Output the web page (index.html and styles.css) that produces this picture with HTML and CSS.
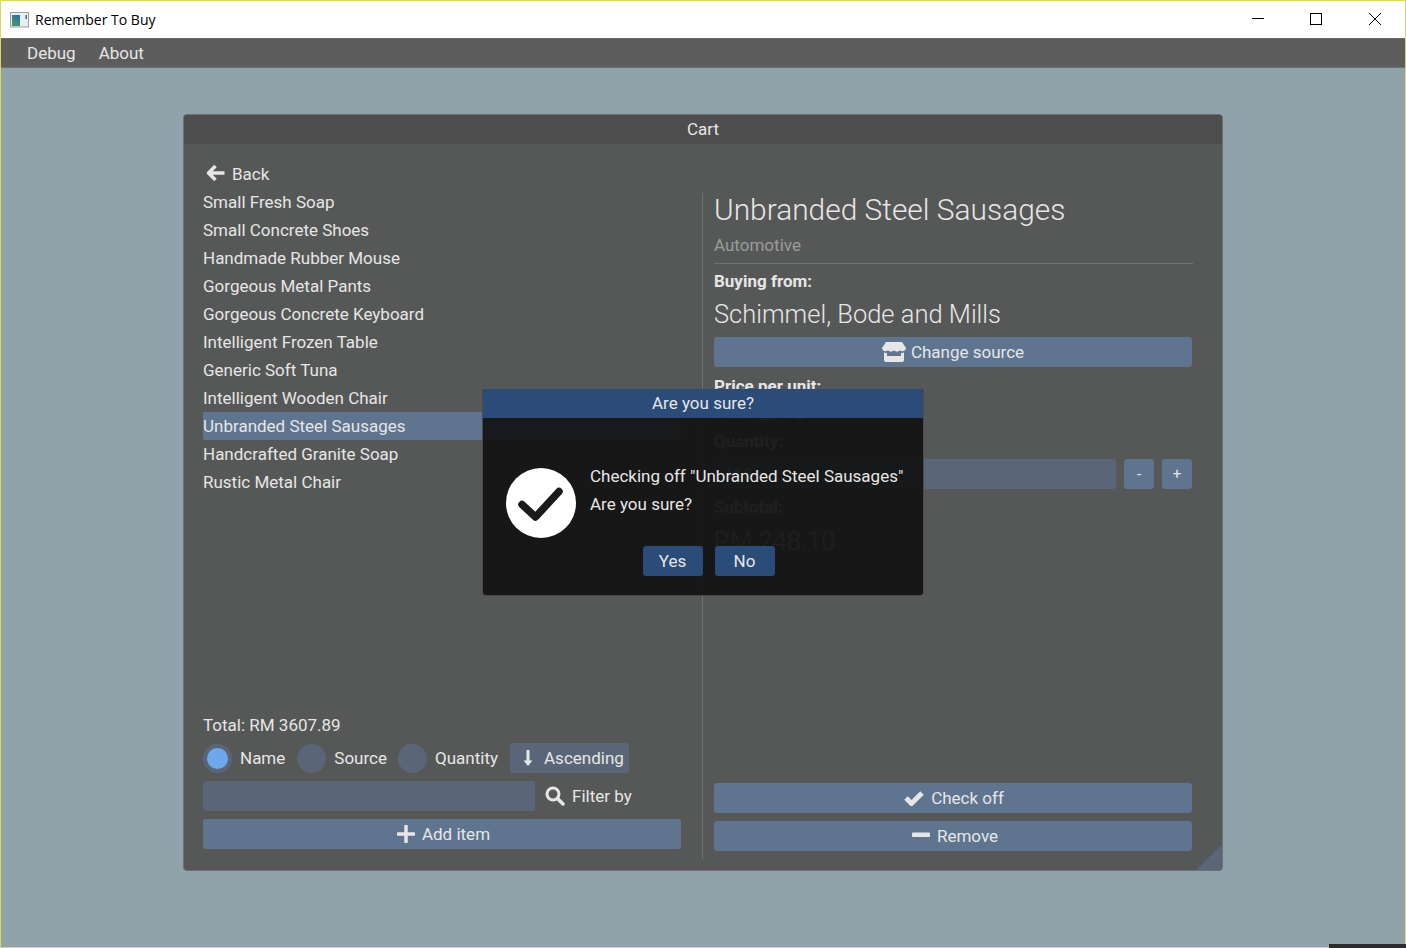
FILE: index.html
```html
<!DOCTYPE html>
<html lang="en">
<head>
    <meta charset="UTF-8">
    <title>Remember To Buy</title>
    <link rel="stylesheet" href="styles.css">
</head>
<body>

<div class="window">
    <div class="titlebar">
        <svg class="app-icon" width="20" height="16" viewBox="0 0 20 16">
            <defs>
                <linearGradient id="appGrad" x1="0" y1="1" x2="0.4" y2="0">
                    <stop offset="0" stop-color="#4f9a6a"/>
                    <stop offset="1" stop-color="#2f7496"/>
                </linearGradient>
            </defs>
            <rect x="0.5" y="0.5" width="18" height="14.500" fill="#e9edeb" stroke="#9a9fa3"/>
            <rect x="2" y="3" width="8" height="11" fill="url(#appGrad)"/>
            <rect x="15.500" y="3" width="1.500" height="4" fill="#2f7496"/>
        </svg>
        <span class="app-title">Remember To Buy</span>
        <div class="window-buttons">
            <svg width="14" height="14" viewBox="0 0 14 14"><path d="M2 6.5h12" stroke="#000" fill="none"/></svg>
            <svg width="14" height="14" viewBox="0 0 14 14"><rect x="1.5" y="1.5" width="11" height="11" stroke="#000" fill="none"/></svg>
            <svg width="14" height="14" viewBox="0 0 14 14"><path d="M1 1l12 12M13 1L1 13" stroke="#000" fill="none"/></svg>
        </div>
    </div>
    <div class="menubar">
        <span>Debug</span>
        <span>About</span>
    </div>

    <div class="desktop">
        <div class="panel">
            <div class="panel-title">Cart</div>
            <div class="panel-body">
                <div class="left-col">
                    <div class="back">
                        <svg width="20" height="18" viewBox="0 0 20 18"><path d="M9.500 2L2.500 9 9.500 16M3 9h15.500" stroke="#e6e6e6" stroke-width="3.500" fill="none" stroke-linejoin="round"/></svg>
                        <span>Back</span>
                    </div>
                    <ul class="item-list">
                        <li>Small Fresh Soap</li>
                        <li>Small Concrete Shoes</li>
                        <li>Handmade Rubber Mouse</li>
                        <li>Gorgeous Metal Pants</li>
                        <li>Gorgeous Concrete Keyboard</li>
                        <li>Intelligent Frozen Table</li>
                        <li>Generic Soft Tuna</li>
                        <li>Intelligent Wooden Chair</li>
                        <li class="selected">Unbranded Steel Sausages</li>
                        <li>Handcrafted Granite Soap</li>
                        <li>Rustic Metal Chair</li>
                    </ul>
                    <div class="total">Total: RM 3607.89</div>
                    <div class="sort-row">
                        <span class="radio checked"><i></i></span>
                        <span class="radio-label">Name</span>
                        <span class="radio"></span>
                        <span class="radio-label tight">Source</span>
                        <span class="radio"></span>
                        <span class="radio-label">Quantity</span>
                        <span class="sort-btn">
                            <svg width="10" height="18" viewBox="0 0 10 18"><path d="M5 1v12" stroke="#e6e6e6" stroke-width="3" fill="none"/><path d="M0.500 11.500h9L5 17z" fill="#e6e6e6"/></svg>
                            Ascending
                        </span>
                    </div>
                    <div class="filter-row">
                        <div class="input filter-input"></div>
                        <svg width="20" height="20" viewBox="0 0 20 20"><circle cx="8" cy="8" r="6" stroke="#e6e6e6" stroke-width="3" fill="none"/><path d="M12.500 12.500L18 18" stroke="#e6e6e6" stroke-width="3.500" stroke-linecap="round"/></svg>
                        <span>Filter by</span>
                    </div>
                    <div class="btn add-btn">
                        <svg width="18" height="18" viewBox="0 0 18 18"><path d="M9 1v16M1 9h16" stroke="#e6e6e6" stroke-width="3.500" stroke-linecap="round"/></svg>
                        Add item
                    </div>
                </div>

                <div class="right-col">
                    <h1 class="item-name">Unbranded Steel Sausages</h1>
                    <div class="category">Automotive</div>
                    <div class="label buying">Buying from:</div>
                    <div class="source-name">Schimmel, Bode and Mills</div>
                    <div class="btn source-btn">
                        <svg width="24" height="20" viewBox="0 0 24 20"><path d="M4 0h16l4 6c0 3-3.500 4-6 2.500-2 1.500-4 1.500-6 0-2 1.500-4 1.500-6 0C3.500 10 0 9 0 6z" fill="#e6e6e6"/><path d="M2 10.500c1.500.5 2 .5 3 .2V14h14v-3.300c1 .3 1.500.3 3-.2V18a2 2 0 0 1-2 2H4a2 2 0 0 1-2-2z" fill="#e6e6e6"/></svg>
                        Change source
                    </div>
                    <div class="label price-label">Price per unit:</div>
                    <div class="price">RM 2.10</div>
                    <div class="label">Quantity:</div>
                    <div class="qty-row">
                        <div class="input qty-input">118</div>
                        <div class="btn small-btn">-</div>
                        <div class="btn small-btn">+</div>
                    </div>
                    <div class="label subtotal-label">Subtotal:</div>
                    <div class="subtotal">RM 248.10</div>
                    <div class="right-actions">
                        <div class="btn check-btn">
                            <svg width="20" height="16" viewBox="0 0 20 16"><path d="M2 8l5.500 5.500L18 3" stroke="#e6e6e6" stroke-width="5" fill="none"/></svg>
                            Check off
                        </div>
                        <div class="btn remove-btn">
                            <svg width="18" height="6" viewBox="0 0 18 6"><rect width="18" height="4.500" y="0.500" rx="1" fill="#e6e6e6"/></svg>
                            Remove
                        </div>
                    </div>
                </div>
            </div>
            <div class="grip"></div>
        </div>

        <div class="modal">
            <div class="modal-title">Are you sure?</div>
            <div class="modal-body">
                <svg class="modal-icon" width="70" height="70" viewBox="0 0 70 70">
                    <circle cx="35" cy="35" r="35" fill="#fff"/>
                    <path d="M16 36.500L29.500 49 53 23.500" stroke="#1a1a1a" stroke-width="7.500" fill="none" stroke-linecap="round" stroke-linejoin="round"/>
                </svg>
                <div class="modal-text">
                    <div>Checking off "Unbranded Steel Sausages"</div>
                    <div>Are you sure?</div>
                </div>
            </div>
            <div class="modal-buttons">
                <div class="modal-btn">Yes</div>
                <div class="modal-btn">No</div>
            </div>
        </div>
    </div>
</div>
<div class="taskbar-edge"></div>

</body>
</html>
```

FILE: styles.css
```css
* {
    box-sizing: border-box;
}
html, body {
    height: 100%;
    margin: 0;
}
body {
    font-family: 'Roboto', sans-serif;
    font-size: 17px;
    color: #e6e6e6;
    overflow: hidden;
}
.window {
    position: relative;
    display: flex;
    flex-direction: column;
    height: 948px;
    border: 1px solid #dfd94f;
    background-color: #90a2aa;
}
.titlebar {
    display: flex;
    align-items: center;
    height: 37px;
    padding-left: 9px;
    background-color: #fff;
    color: #000;
    font-family: 'Open Sans', sans-serif;
    font-size: 14px;
}
.app-icon {
    margin-right: 5px;
}
.window-buttons {
    display: flex;
    gap: 45px;
    margin-left: auto;
    margin-right: 23px;
    margin-bottom: 2px;
}
.menubar {
    display: flex;
    gap: 23px;
    align-items: center;
    height: 30px;
    padding-left: 26px;
    background-color: #5d5d5d;
    border-top: 1px solid #6a6a6a;
    border-bottom: 1px solid #6d7274;
}
.desktop {
    flex: 1;
    padding-top: 46px;
}
.panel {
    position: relative;
    width: 1040px;
    height: 757px;
    margin: 0 auto;
    display: flex;
    flex-direction: column;
    background-color: #565857;
    border: 1px solid #6c6f70;
    border-radius: 4px;
    overflow: hidden;
}
.panel-title {
    height: 29px;
    line-height: 29px;
    text-align: center;
    background-color: #4d4d4d;
}
.panel-body {
    flex: 1;
    display: flex;
    padding: 0 30px 11px 19px;
}
.left-col {
    width: 478px;
    display: flex;
    flex-direction: column;
    padding-bottom: 10px;
}
.back {
    display: flex;
    align-items: center;
    gap: 6px;
    height: 28px;
    margin-top: 16px;
    padding-left: 3px;
}
.back svg {
    margin-bottom: 2px;
}
.item-list {
    list-style: none;
    margin: 0;
    padding: 0;
    flex: 1;
}
.item-list li {
    height: 28px;
    line-height: 29px;
    border-radius: 2px;
}
.item-list .selected {
    background-color: #5f748f;
}
.total {
    height: 28px;
    line-height: 26px;
}
.sort-row {
    display: flex;
    align-items: center;
    height: 30px;
    margin-top: 3px;
}
.radio {
    width: 29px;
    height: 29px;
    border-radius: 50%;
    background-color: #5a6677;
    display: flex;
    align-items: center;
    justify-content: center;
}
.radio i {
    width: 21px;
    height: 21px;
    border-radius: 50%;
    background-color: #6ea8ec;
}
.radio-label {
    margin: 0 12px 0 8px;
}
.radio-label.tight {
    margin-right: 11px;
}
.sort-btn {
    display: flex;
    align-items: center;
    gap: 11px;
    height: 30px;
    padding: 0 5px 0 13px;
    background-color: #5a6677;
    border-radius: 3px;
}
.filter-row {
    display: flex;
    align-items: center;
    height: 30px;
    margin-top: 8px;
}
.filter-row svg {
    margin: 0 6px 0 10px;
}
.filter-row span {
    margin-left: 1px;
}
.input {
    height: 30px;
    line-height: 30px;
    padding-left: 10px;
    background-color: #5a6677;
    border-radius: 3px;
}
.filter-input {
    width: 332px;
}
.btn {
    display: flex;
    align-items: center;
    justify-content: center;
    gap: 7px;
    height: 30px;
    background-color: #5f748f;
    border-radius: 3px;
}
.source-btn {
    gap: 5px;
}
.add-btn {
    margin-top: 8px;
    padding-left: 3px;
}
.right-col {
    flex: 1;
    display: flex;
    flex-direction: column;
    margin: 49px 0 0 21px;
    padding-left: 11px;
    border-left: 1px solid #6f7273;
}
.item-name {
    margin: 0;
    font-size: 29.9px;
    font-weight: 300;
    line-height: 34px;
}
.category {
    height: 37px;
    padding-top: 8px;
    line-height: 20px;
    color: #9a9c9b;
    border-bottom: 1px solid #6f7273;
    margin-right: -1px;
}
.label {
    font-weight: 700;
    height: 20px;
    line-height: 20px;
}
.buying {
    margin-top: 7px;
}
.source-name {
    font-size: 25.5px;
    font-weight: 300;
    line-height: 30px;
    margin: 8px 0 8px;
}
.price-label {
    margin-top: 9px;
}
.price {
    font-size: 25.5px;
    font-weight: 300;
    line-height: 30px;
    margin-bottom: 5px;
}
.qty-row {
    display: flex;
    gap: 8px;
    margin-top: 8px;
}
.qty-input {
    flex: 1;
}
.small-btn {
    width: 30px;
    font-size: 15px;
}
.subtotal-label {
    margin-top: 8px;
}
.subtotal {
    font-size: 25.5px;
    font-weight: 300;
    line-height: 30px;
    margin-top: 9px;
}
.right-actions {
    margin-top: auto;
    margin-bottom: 8px;
}
.check-btn {
    padding-left: 2px;
}
.remove-btn {
    margin-top: 8px;
    padding-left: 4px;
}
.remove-btn svg {
    margin-bottom: 3px;
}
.grip {
    position: absolute;
    right: 0;
    bottom: 0;
    width: 26px;
    height: 26px;
    background: linear-gradient(135deg, transparent 50%, #5a6677 50%);
}
.modal {
    position: absolute;
    left: 481px;
    top: 388px;
    width: 442px;
    height: 207px;
    border-radius: 4px;
    overflow: hidden;
    background-color: rgba(20, 20, 20, 0.95);
    border: 1px solid #4a4c4c;
    border-top: none;
}
.modal-title {
    height: 29px;
    line-height: 29px;
    text-align: center;
    background-color: #2b4b79;
}
.modal-body {
    display: flex;
    align-items: center;
    padding: 50px 0 0 23px;
}
.modal-text {
    margin-left: 14px;
    line-height: 28px;
    margin-top: -27px;
}
.modal-buttons {
    display: flex;
    justify-content: center;
    gap: 12px;
    margin-top: 8px;
    padding-left: 11px;
}
.modal-btn {
    width: 60px;
    height: 30px;
    line-height: 30px;
    text-align: center;
    background-color: #2b4b79;
    border-radius: 3px;
}
.taskbar-edge {
    position: absolute;
    right: 0;
    bottom: 0;
    width: 77px;
    height: 4px;
    background-color: #2b2a2c;
}
```
